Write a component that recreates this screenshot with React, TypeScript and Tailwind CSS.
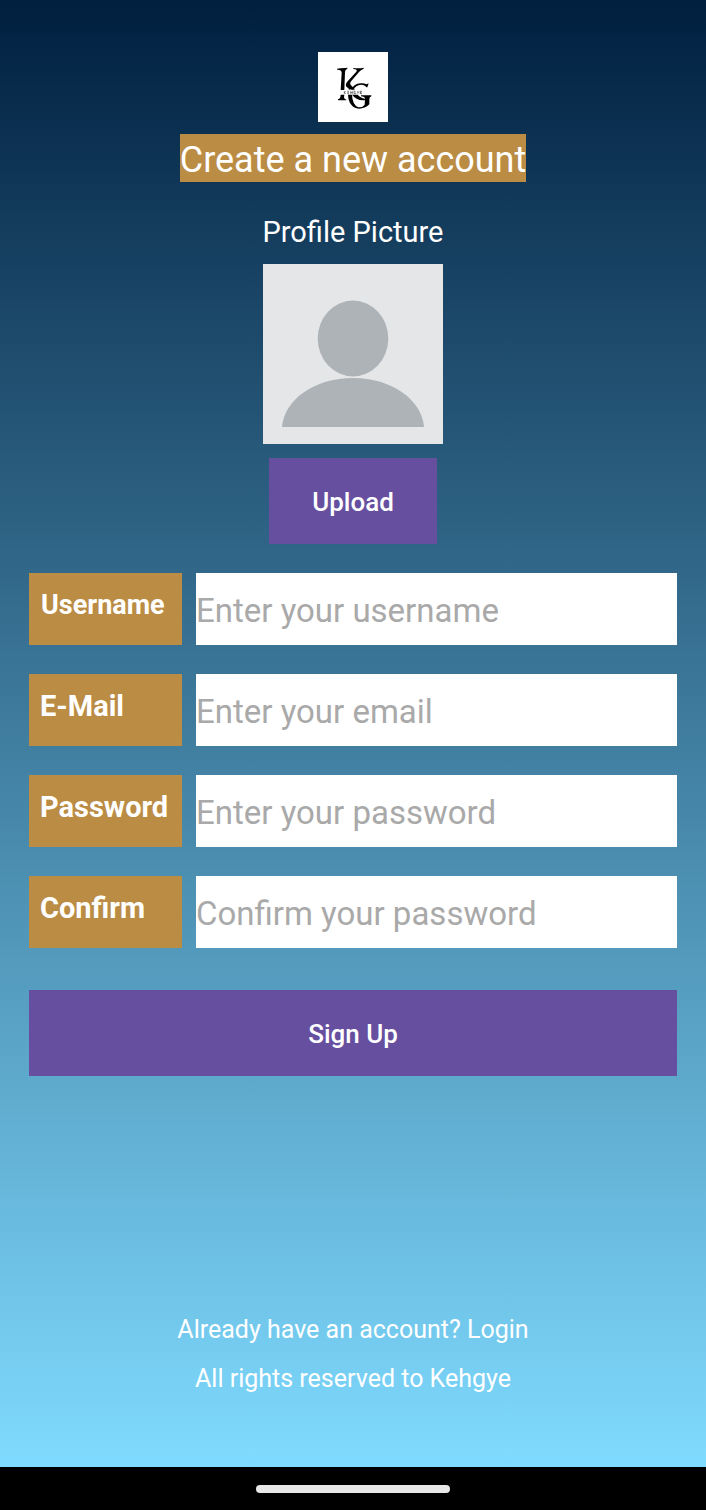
import React from "react";

type FieldProps = {
  id: string;
  label: string;
  type: string;
  placeholder: string;
  small?: boolean;
};

function Field({ id, label, type, placeholder, small }: FieldProps) {
  return (
    <div className="flex h-[72px] gap-[14px]">
      <label
        htmlFor={id}
        className={`w-[153px] shrink-0 bg-[#bb8c44] pt-4 leading-8 font-bold ${small ? "pl-3 text-[27px]" : "pl-[11px] text-[29px]"}`}
      >
        {label}
      </label>
      <input
        id={id}
        type={type}
        placeholder={placeholder}
        className="min-w-0 flex-1 bg-white pt-[3px] text-[33px] text-black outline-none placeholder:text-[#a9a9a9] placeholder:opacity-100"
      />
    </div>
  );
}

function Logo() {
  return (
    <svg viewBox="24 24 210 210" role="img" aria-label="KG" className="size-[70px] bg-white">
      <g fill="#000">
        <path d="M81 74Q90 72 105 72L112 71V74Q105 76 105 84L103 138H92L95 86Q95 77 82 77Z" />
        <path d="M130 72Q146 74 161 71V74Q152 78 147 84L122 113Q118 119 123 124L134 136H118L108 127Q105 121 111 114L139 83Q144 76 130 75Z" />
        <path d="M92 152H103L102 160Q102 165 109 167V169H84V166Q90 165 91 160Z" />
        <path d="M126 152H143Q149 160 167 165V168Q151 171 140 164Q132 160 126 152Z" />
        <path d="M176 118L172 130H169Q165 122 153 122Q137 123 130 137H123Q132 119 152 118Q163 117 169 121Z" />
        <path d="M114 152H126Q127 182 145 190Q158 191 164 182L165 164Q165 158 153 157V154H184V157Q178 158 178 166V181Q165 194 147 194Q116 190 114 152Z" />
      </g>
      <g stroke="#333" strokeWidth="2" fill="none">
        <path d="M103 142V149M103 146L107 142M103 146L107 149M112 142H117M112 146H116M112 149H117M122 142V149M127 142V149M122 146H127M136 142H132V149H137V146M142 142L144 146L147 142M144 146V149M156 142H151V149H156M151 146H155" />
        <path d="M116 137H121M125 137H134" />
      </g>
    </svg>
  );
}

function Avatar() {
  return (
    <svg viewBox="0 0 180 180" role="img" aria-label="Profile picture placeholder" className="mt-[14px] size-[180px] bg-[#e4e6e8]">
      <g fill="#aeb3b7">
        <ellipse cx="90" cy="74.5" rx="35.3" ry="38" />
        <path d="M19 163C21 136 51 114 90 114S159 136 161 163Z" />
      </g>
    </svg>
  );
}

export default function App() {
  return (
    <div className="flex min-h-screen flex-col bg-black font-[Roboto,sans-serif] text-white">
      <main className="flex flex-1 flex-col items-center bg-linear-to-b/srgb from-[#001f3f] to-[#7fdbff] px-[29px] pt-[52px]">
        <Logo />
        <h1 className="mt-3 bg-[#bb8c44] pt-1 text-[36px] leading-[44px]">Create a new account</h1>
        <h2 className="mt-8 text-[29px] leading-9">Profile Picture</h2>
        <Avatar />
        <button type="button" className="mt-[14px] h-[86px] w-[168px] bg-[#674fa0] pt-[2px] text-[26px] font-medium">
          Upload
        </button>
        <form className="mt-[29px] flex w-full flex-col gap-[29px]" onSubmit={(e) => e.preventDefault()}>
          <Field id="username" label="Username" type="text" placeholder="Enter your username" small />
          <Field id="email" label="E-Mail" type="email" placeholder="Enter your email" />
          <Field id="password" label="Password" type="password" placeholder="Enter your password" />
          <Field id="confirm" label="Confirm" type="password" placeholder="Confirm your password" />
          <button type="submit" className="mt-[13px] h-[86px] bg-[#674fa0] pt-[2px] text-[26px] font-medium">
            Sign Up
          </button>
        </form>
        <footer className="mt-auto flex flex-col items-center gap-[17px] pt-10 pb-[72px] text-[25px] leading-8">
          <a href="#login">Already have an account? Login</a>
          <p>All rights reserved to Kehgye</p>
        </footer>
      </main>
      <div className="flex h-[43px] items-center justify-center">
        <div className="h-2 w-[194px] rounded-full bg-[#e8e8e8]" />
      </div>
    </div>
  );
}
